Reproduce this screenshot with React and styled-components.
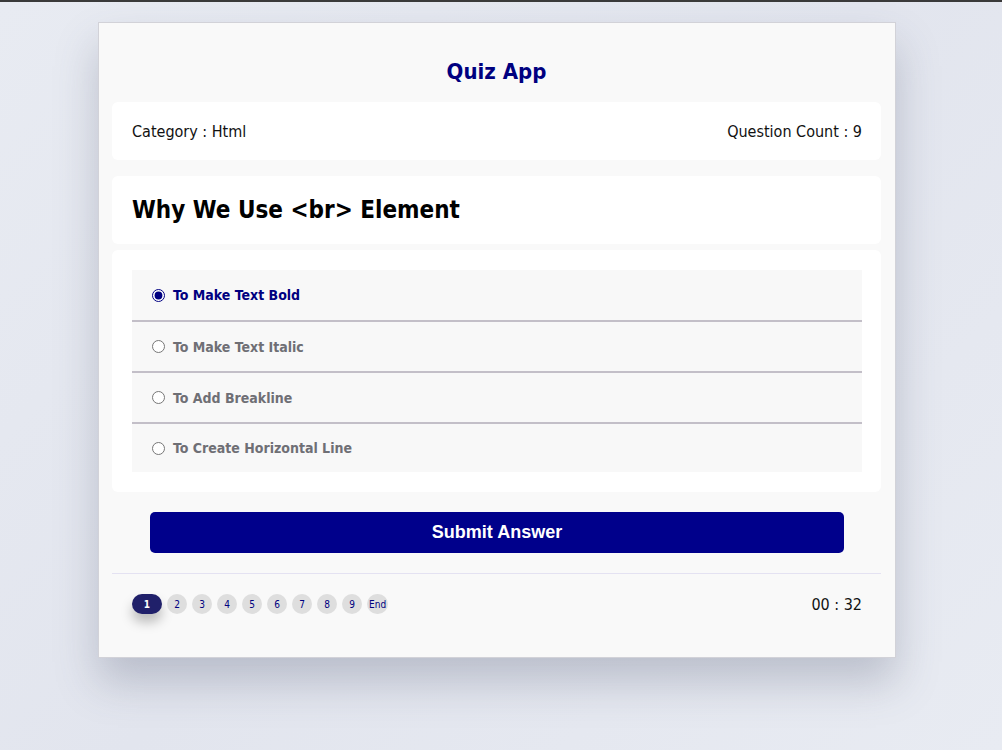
import React, { useState } from 'react';
import styled, { createGlobalStyle } from 'styled-components';

const GlobalStyle = createGlobalStyle`
	* {
		box-sizing: border-box;
	}
	body {
		margin: 0;
		min-height: 750px;
		background: linear-gradient(135deg, #e8ebf2 0%, #e2e5ee 50%, #e8ebf2 100%);
		border-top: 2px solid #3a3a3a;
		font-family: 'DejaVu Sans Condensed', 'DejaVu Sans', sans-serif;
		font-stretch: condensed;
	}
`;

const Page = styled.div`
	display: flex;
	padding: 20px 0 0 98px;
`;

const Card = styled.div`
	width: 798px;
	background-color: #f9f9f9;
	border: 1px solid #d2d2d8;
	box-shadow: 0 24px 40px rgba(80, 85, 110, 0.28);
	padding: 0 14px 43px 13px;
	display: flex;
	flex-direction: column;
`;

const Header = styled.h1`
	margin: 0;
	height: 79px;
	display: flex;
	align-items: center;
	justify-content: center;
	padding-top: 18px;
	color: #000080;
	font-size: 22px;
	font-weight: 700;
`;

const InfoBar = styled.div`
	background: #fff;
	border-radius: 6px;
	height: 58px;
	padding: 0 19px 0 20px;
	display: flex;
	align-items: center;
	justify-content: space-between;
	font-size: 16px;
	color: #111;
`;

const QuestionBox = styled.div`
	margin-top: 16px;
	background: #fff;
	border-radius: 6px;
	height: 68px;
	padding: 0 20px;
	display: flex;
	align-items: center;
`;

const QuestionText = styled.h2`
	margin: 0;
	font-size: 24px;
	font-weight: 700;
	color: #000;
`;

const AnswersBox = styled.div`
	margin-top: 6px;
	background: #fff;
	border-radius: 6px;
	padding: 20px 19px 20px 20px;
`;

const AnswerList = styled.ul`
	list-style: none;
	margin: 0;
	padding: 0;
	background: #f8f8f8;
`;

const AnswerRow = styled.li`
	height: ${(p) => (p.first ? '50px' : '51px')};
	display: flex;
	align-items: center;
	padding-left: 20px;
	gap: 8px;
	border-top: ${(p) => (p.first ? 'none' : '2px solid #c3bfc8')};
	font-size: 14px;
	font-weight: 700;
	color: ${(p) => (p.checked ? '#000080' : '#6f6f75')};
	cursor: pointer;
	&:last-child {
		height: 50px;
	}
`;

const Radio = styled.input`
	margin: 0;
	width: 13px;
	height: 13px;
	accent-color: #000080;
`;

const SubmitWrap = styled.div`
	padding: 20px 37px 20px 38px;
	border-bottom: 1px solid #e4e2f2;
`;

const SubmitButton = styled.button`
	width: 100%;
	height: 41px;
	border: none;
	border-radius: 5px;
	background: #00008b;
	color: #fff;
	font-family: 'Liberation Sans', Arial, sans-serif;
	font-size: 18px;
	font-weight: 700;
	cursor: pointer;
`;

const Footer = styled.div`
	display: flex;
	align-items: center;
	justify-content: space-between;
	padding: 20px 19px 0 20px;
`;

const Pages = styled.div`
	display: flex;
	gap: 5px;
`;

const PageDot = styled.span`
	height: 20px;
	min-width: ${(p) => (p.active ? '30px' : '20px')};
	padding: 0 2px;
	border-radius: 10px;
	display: flex;
	align-items: center;
	justify-content: center;
	font-size: 10px;
	font-weight: ${(p) => (p.active ? 700 : 400)};
	background: ${(p) => (p.active ? '#20206a' : '#dedede')};
	color: ${(p) => (p.active ? '#fff' : '#000080')};
	box-shadow: ${(p) => (p.active ? '0 8px 12px rgba(0, 0, 0, 0.25)' : 'none')};
`;

const Timer = styled.span`
	font-size: 16px;
	color: #111;
`;

const answers = [
	'To Make Text Bold',
	'To Make Text Italic',
	'To Add Breakline',
	'To Create Horizontal Line',
];

export default function App() {
	const [picked, setPicked] = useState(0);

	return (
		<>
			<GlobalStyle />
			<Page>
				<Card>
					<Header>Quiz App</Header>
					<InfoBar>
						<span>Category : Html</span>
						<span>Question Count : 9</span>
					</InfoBar>
					<QuestionBox>
						<QuestionText>Why We Use &lt;br&gt; Element</QuestionText>
					</QuestionBox>
					<AnswersBox>
						<AnswerList>
							{answers.map((a, i) => (
								<AnswerRow
									key={a}
									first={i === 0}
									checked={picked === i}
									onClick={() => setPicked(i)}
								>
									<Radio type="radio" name="answer" checked={picked === i} readOnly />
									{a}
								</AnswerRow>
							))}
						</AnswerList>
					</AnswersBox>
					<SubmitWrap>
						<SubmitButton>Submit Answer</SubmitButton>
					</SubmitWrap>
					<Footer>
						<Pages>
							{['1', '2', '3', '4', '5', '6', '7', '8', '9', 'End'].map((n, i) => (
								<PageDot key={n} active={i === 0}>
									{n}
								</PageDot>
							))}
						</Pages>
						<Timer>00 : 32</Timer>
					</Footer>
				</Card>
			</Page>
		</>
	);
}
